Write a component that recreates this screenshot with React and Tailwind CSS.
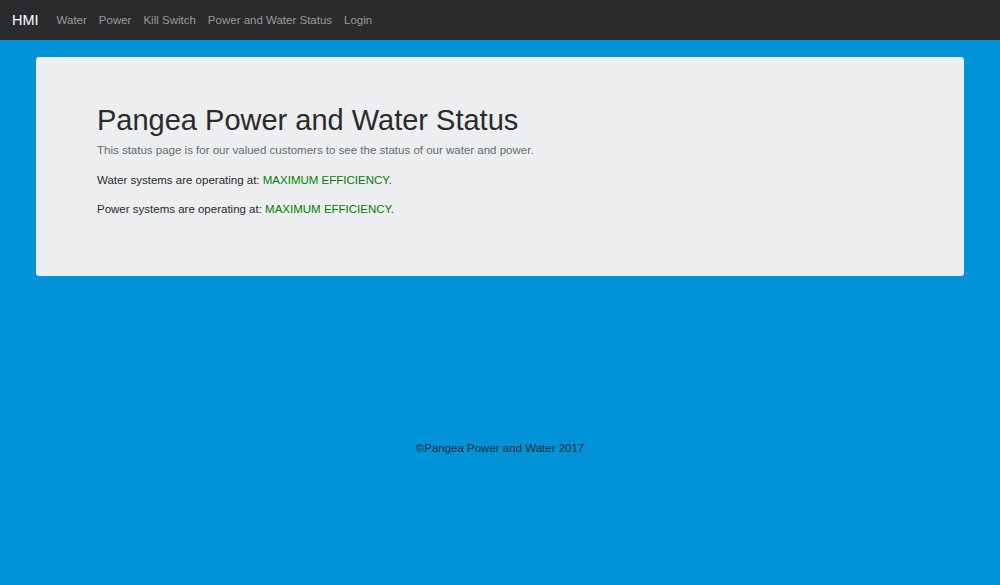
export default function App() {
  const links = ['Water', 'Power', 'Kill Switch', 'Power and Water Status', 'Login'];
  return (
    <div className="min-h-[585px] bg-[#0093d8] font-['Liberation_Sans',Arial,sans-serif]">
      {/* navbar */}
      <nav className="h-10 bg-[#292b2c] flex items-center px-3 pt-[1px]">
        <span className="text-[14.5px] text-white mr-[18px]">HMI</span>
        <div className="flex gap-[12px] text-[11.5px] text-[#9a9b9c]">
          {links.map((l) => (
            <span key={l}>{l}</span>
          ))}
        </div>
      </nav>

      {/* jumbotron */}
      <div className="px-9 pt-[17px]">
        <div className="bg-[#eceeef] rounded-[3px] h-[219px] px-[61px] pt-[44px]">
          <h1 className="text-[29px] leading-[38px] text-[#292b2c]">Pangea Power and Water Status</h1>
          <p className="text-[11.5px] leading-[18px] text-[#636c72] mt-[2px]">
            This status page is for our valued customers to see the status of our water and power.
          </p>
          <p className="text-[11.5px] leading-[18px] text-[#292b2c] mt-[12px]">
            Water systems are operating at: <span className="text-[#008000]">MAXIMUM EFFICIENCY</span>.
          </p>
          <p className="text-[11.5px] leading-[18px] text-[#292b2c] mt-[11px]">
            Power systems are operating at: <span className="text-[#008000]">MAXIMUM EFFICIENCY</span>.
          </p>
        </div>
      </div>

      {/* footer */}
      <footer className="text-center text-[11.5px] text-[#292b2c] pt-[164px]">
        ©Pangea Power and Water 2017
      </footer>
    </div>
  );
}
